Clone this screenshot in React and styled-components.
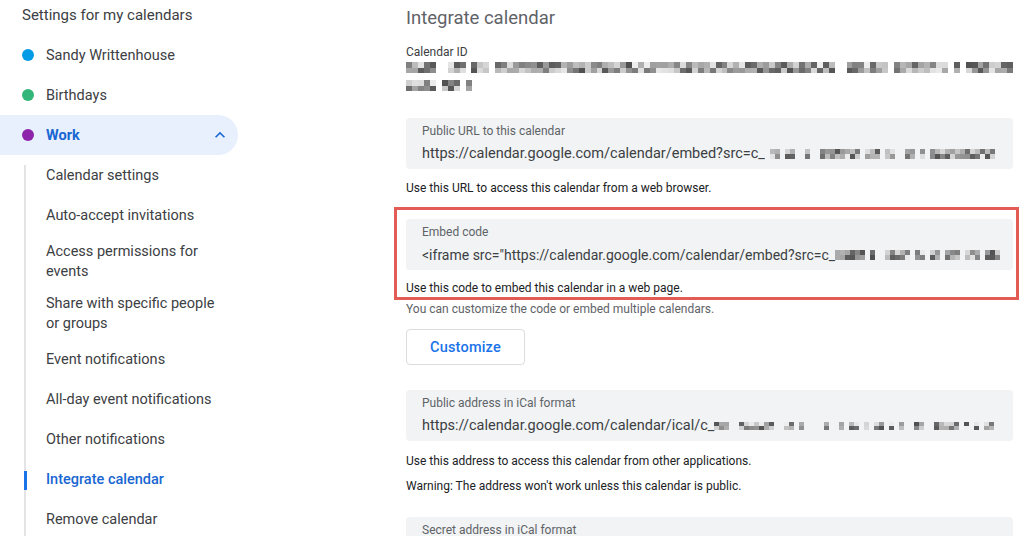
import React from 'react';
import styled, { createGlobalStyle } from 'styled-components';

const GlobalStyle = createGlobalStyle`
  html, body {
    margin: 0;
    padding: 0;
    background: #fff;
    overflow: hidden;
  }
  body {
    font-family: Roboto, "Noto Sans", Arial, sans-serif;
    color: #3c4043;
  }
`;

// Layout
const Page = styled.div`
  display: flex;
  width: 1022px;
  height: 536px;
  overflow: hidden;
`;

const Sidebar = styled.nav`
  width: 238px;
  flex-shrink: 0;
  padding-top: 5px;
`;

const SidebarTitle = styled.div`
  font-size: 15px;
  line-height: 20px;
  color: #3c4043;
  padding-left: 22px;
  margin-bottom: 10px;
`;

const CalendarItem = styled.div`
  display: flex;
  align-items: center;
  height: 40px;
  padding: 0 8px 0 22px;
  font-size: 14.5px;
  color: ${p => (p.$active ? '#1967d2' : '#3c4043')};
  font-weight: ${p => (p.$active ? 700 : 400)};
  background: ${p => (p.$active ? '#e8f0fe' : 'transparent')};
  border-radius: 0 20px 20px 0;
`;

const Dot = styled.span`
  width: 12px;
  height: 12px;
  border-radius: 50%;
  background: ${p => p.$color};
  margin-right: 12px;
  flex-shrink: 0;
`;

const Grow = styled.span`
  flex: 1;
`;

const SubList = styled.div`
  position: relative;
  margin: 1px 0 0 24px;

  &::before {
    content: '';
    position: absolute;
    left: 0;
    top: 9px;
    bottom: 0;
    width: 2px;
    background: #e3e4e6;
  }
`;

const SubItem = styled.div`
  position: relative;
  display: flex;
  align-items: center;
  min-height: 40px;
  box-sizing: border-box;
  padding: 6px 0 6px 22px;
  width: 201px;
  font-size: 14.5px;
  line-height: 20px;
  color: ${p => (p.$active ? '#1967d2' : '#3c4043')};
  font-weight: ${p => (p.$active ? 500 : 400)};

  &::before {
    content: '';
    display: ${p => (p.$active ? 'block' : 'none')};
    position: absolute;
    left: 0;
    top: 11px;
    width: 3px;
    height: 19px;
    background: #1a73e8;
  }
`;

const Main = styled.main`
  width: 607px;
  margin-left: 168px;
  padding-top: 6px;
`;

const Title = styled.h2`
  margin: 0 0 14px;
  font-size: 18.5px;
  line-height: 24px;
  font-weight: 400;
  color: #5f6368;
`;

const FieldLabel = styled.div`
  font-size: 12px;
  line-height: 16px;
  color: #3c4043;
`;

const MosaicBlock = styled.div`
  display: flex;
  flex-direction: column;
  gap: 7px;
  margin-top: 2px;
`;

const MosaicRow = styled.div`
  display: flex;
  height: ${p => p.$h}px;
`;

const MosaicCol = styled.span`
  display: flex;
  flex-direction: column;
  width: ${p => p.$w}px;
`;

const Cell = styled.span`
  flex: 1;
  background: ${p => p.$shade};
`;

const CopyBox = styled.div`
  margin-top: ${p => p.$mt || 0}px;
  background: #f1f3f4;
  border-radius: 4px;
  padding: 5px 16px 4px;
  height: 51px;
  box-sizing: border-box;
  overflow: hidden;
`;

const BoxLabel = styled.div`
  font-size: 12px;
  line-height: 16px;
  color: #5f6368;
  margin-bottom: 3px;
`;

const BoxValue = styled.div`
  display: flex;
  align-items: center;
  font-size: ${p => p.$size || 14.5}px;
  line-height: 24px;
  color: #3c4043;
  white-space: nowrap;
`;

const Help = styled.div`
  margin-top: ${p => p.$mt ?? 11}px;
  font-size: 12px;
  line-height: 16px;
  color: ${p => (p.$muted ? '#5f6368' : '#202124')};
`;

const Highlight = styled.div`
  margin: 11px -6px 0 -12px;
  padding: 9px 3px 1px 9px;
  border: 3px solid #e35b55;
`;

const Button = styled.button`
  margin-top: 12px;
  width: 119px;
  height: 36px;
  border: 1px solid #dadce0;
  border-radius: 4px;
  background: #fff;
  color: #1a73e8;
  font-family: Roboto, "Noto Sans", Arial, sans-serif;
  font-size: 14.5px;
  font-weight: 500;
  letter-spacing: 0.2px;
  cursor: pointer;
`;

// deterministic pseudo random greys for the blurred ids
function makeRng(seed) {
  let s = seed;
  return () => {
    s = (s * 1103515245 + 12345) % 2147483648;
    return s / 2147483648;
  };
}

function grey(v) {
  const c = Math.round(v);
  return `rgb(${c},${c},${c})`;
}

function buildCols(seed, count, blankRate, bg) {
  const rnd = makeRng(seed);
  const cols = [];
  for (let i = 0; i < count; i++) {
    if (rnd() < blankRate) {
      cols.push([bg, bg]);
      continue;
    }
    cols.push([grey(80 + rnd() * 160), grey(80 + rnd() * 160)]);
  }
  return cols;
}

const Mosaic = ({ seed, count, w = 6, h = 11, blank = 0.08, bg = '#fff' }) => {
  const cols = buildCols(seed, count, blank, bg);
  return (
    <MosaicRow $h={h}>
      {cols.map((c, i) => (
        <MosaicCol key={i} $w={w}>
          <Cell $shade={c[0]} />
          <Cell $shade={c[1]} />
        </MosaicCol>
      ))}
    </MosaicRow>
  );
};

const ChevronUp = () => (
  <svg width="20" height="20" viewBox="0 0 24 24" fill="#1967d2">
    <path d="M12 8l-6 6 1.41 1.41L12 10.83l4.59 4.58L18 14z" />
  </svg>
);

const subItems = [
  'Calendar settings',
  'Auto-accept invitations',
  'Access permissions for events',
  'Share with specific people or groups',
  'Event notifications',
  'All-day event notifications',
  'Other notifications',
  'Integrate calendar',
  'Remove calendar',
];

const App = () => {
  return (
    <Page>
      <GlobalStyle />
      <Sidebar>
        <SidebarTitle>Settings for my calendars</SidebarTitle>
        <CalendarItem>
          <Dot $color="#039be5" />
          Sandy Writtenhouse
        </CalendarItem>
        <CalendarItem>
          <Dot $color="#33b679" />
          Birthdays
        </CalendarItem>
        <CalendarItem $active>
          <Dot $color="#8e24aa" />
          <Grow>Work</Grow>
          <ChevronUp />
        </CalendarItem>
        <SubList>
          {subItems.map(label => (
            <SubItem key={label} $active={label === 'Integrate calendar'}>
              {label}
            </SubItem>
          ))}
        </SubList>
      </Sidebar>

      <Main>
        <Title>Integrate calendar</Title>
        <FieldLabel>Calendar ID</FieldLabel>
        <MosaicBlock>
          <Mosaic seed={7} count={102} />
          <Mosaic seed={31} count={11} blank={0.02} />
        </MosaicBlock>

        <CopyBox $mt={27}>
          <BoxLabel>Public URL to this calendar</BoxLabel>
          <BoxValue>
            https://calendar.google.com/calendar/embed?src=c_
            <Mosaic seed={12} count={46} w={5} h={10} blank={0.3} bg="#f1f3f4" />
          </BoxValue>
        </CopyBox>
        <Help>Use this URL to access this calendar from a web browser.</Help>

        <Highlight>
          <CopyBox>
            <BoxLabel>Embed code</BoxLabel>
            <BoxValue $size={14}>
              &lt;iframe src="https://calendar.google.com/calendar/embed?src=c_
              <Mosaic seed={44} count={34} w={5} h={10} blank={0.35} bg="#f1f3f4" />
            </BoxValue>
          </CopyBox>
          <Help $mt={10}>Use this code to embed this calendar in a web page.</Help>
        </Highlight>
        <Help $mt={1} $muted>You can customize the code or embed multiple calendars.</Help>
        <Button>Customize</Button>

        <CopyBox $mt={25}>
          <BoxLabel>Public address in iCal format</BoxLabel>
          <BoxValue>
            https://calendar.google.com/calendar/ical/c_
            <Mosaic seed={91} count={56} w={5} h={8} blank={0.45} bg="#f1f3f4" />
          </BoxValue>
        </CopyBox>
        <Help $mt={12}>Use this address to access this calendar from other applications.</Help>
        <Help $mt={9}>Warning: The address won't work unless this calendar is public.</Help>

        <CopyBox $mt={23}>
          <BoxLabel>Secret address in iCal format</BoxLabel>
        </CopyBox>
      </Main>
    </Page>
  );
};

export default App;
